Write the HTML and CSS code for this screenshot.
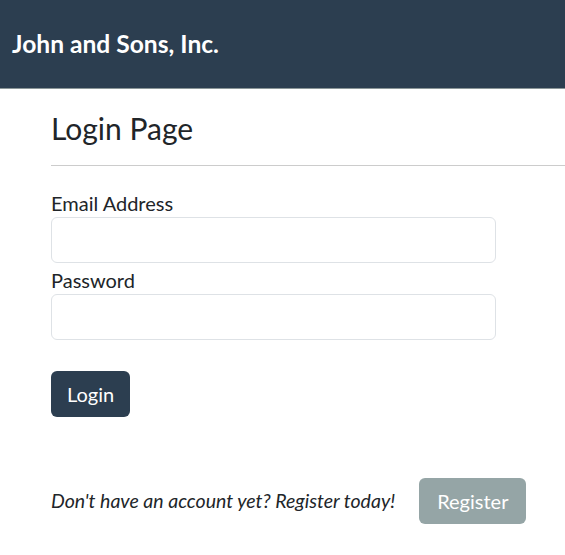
FILE: index.html
```html
<!DOCTYPE html>
<html>
<head>
<meta charset="utf-8">
<link rel="stylesheet" href="styles.css">
</head>
<body>
<nav class="navbar">
  <span class="brand">John and Sons, Inc.</span>
</nav>
<main class="page">
  <h1 class="title">Login Page</h1>
  <hr class="rule">
  <form class="form">
    <label class="label" for="email">Email Address</label>
    <input class="input" id="email" type="email">
    <label class="label" for="pw">Password</label>
    <input class="input" id="pw" type="password">
    <button class="btn btn-primary" type="button">Login</button>
  </form>
  <div class="register">
    <em class="prompt">Don't have an account yet? Register today!</em>
    <button class="btn btn-secondary" type="button">Register</button>
  </div>
</main>
</body>
</html>
```

FILE: styles.css
```css
html, body {
  margin: 0;
  padding: 0;
  background: #fff;
  font-family: Lato, "Open Sans", sans-serif;
  color: #212529;
  overflow: hidden;
}
.navbar {
  height: 89px;
  background: #2c3e50;
  border-bottom: 1px solid #8b9698;
  display: flex;
  align-items: center;
  padding-left: 12px;
  box-sizing: border-box;
}
.brand {
  color: #fff;
  font-weight: 700;
  font-size: 24.6px;
  line-height: 1;
}
.page {
  padding-left: 51px;
}
.title {
  margin: 0;
  padding-top: 21px;
  font-size: 30px;
  font-weight: 400;
  line-height: 36px;
}
.rule {
  margin: 19px 0 0 0;
  border: 0;
  border-top: 1px solid #ccc;
}
.form {
  display: flex;
  flex-direction: column;
  align-items: flex-start;
  width: 445px;
  padding-top: 25px;
}
.label {
  font-size: 20px;
  line-height: 24px;
  margin-bottom: 2px;
}
.input {
  width: 445px;
  height: 46px;
  box-sizing: border-box;
  border: 1px solid #dee2e6;
  border-radius: 6px;
  margin: 0 0 5px 0;
  font-size: 18px;
}
.btn {
  font-family: inherit;
  border: 0;
  border-radius: 6px;
  color: #fff;
  height: 46px;
  font-size: 20px;
  cursor: pointer;
}
.btn-primary {
  margin-top: 26px;
  background: #2c3e50;
  padding: 0 16px;
}
.register {
  display: flex;
  align-items: center;
  margin-top: 61px;
  gap: 24px;
}
.prompt {
  font-size: 19.5px;
  line-height: 24px;
}
.btn-secondary {
  background: #95a5a6;
  padding: 0 18px;
}
```
